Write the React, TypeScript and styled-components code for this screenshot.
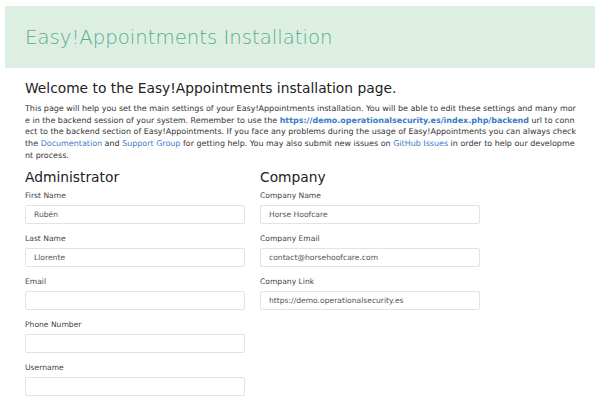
import React from "react";
import styled, { createGlobalStyle } from "styled-components";

const GlobalStyle = createGlobalStyle`
  html, body {
    margin: 0;
    padding: 0;
    background: #ffffff;
    font-family: "DejaVu Sans", "Liberation Sans", sans-serif;
    color: #333333;
  }
`;

const Page = styled.div`
  width: 600px;
  height: 407px;
  overflow: hidden;
  padding-top: 6px;
  box-sizing: border-box;
`;

const Banner = styled.header`
  margin: 0 5px;
  height: 62px;
  background-color: #ddefe3;
  display: flex;
  align-items: center;
  padding-left: 20px;
`;

const Title = styled.h1`
  margin: 0;
  font-size: 19.7px;
  font-weight: 200;
  color: #5aac8a;
`;

const Content = styled.main`
  padding: 0 25px;
`;

const Welcome = styled.h2`
  margin: 12px 0 7px 0;
  font-size: 13.8px;
  font-weight: normal;
  color: #222222;
`;

const Intro = styled.p`
  margin: 0;
  width: 552px;
  font-size: 7.98px;
  line-height: 11.7px;
  word-break: break-all;
  color: #333333;
`;

const Link = styled.a<{ $bold?: boolean }>`
  color: #3b7bc8;
  text-decoration: none;
  font-weight: ${({ $bold }) => ($bold ? "bold" : "normal")};
`;

const Columns = styled.div`
  display: grid;
  grid-template-columns: 220px 220px;
  column-gap: 15px;
  margin-top: 7px;
`;

const Column = styled.section`
  display: flex;
  flex-direction: column;
`;

const SectionTitle = styled.h3`
  margin: 0 0 5px 0;
  font-size: 13.8px;
  font-weight: normal;
  color: #222222;
`;

const Field = styled.div`
  display: flex;
  flex-direction: column;
  margin-bottom: 9px;
`;

const Label = styled.label`
  font-size: 7.6px;
  line-height: 11px;
  color: #444444;
  margin-bottom: 4px;
`;

const Input = styled.input`
  box-sizing: border-box;
  width: 220px;
  height: 19px;
  border: 1px solid #e3e3e3;
  border-radius: 2px;
  padding: 0 8px;
  font-family: "DejaVu Sans", sans-serif;
  font-size: 7.6px;
  color: #555555;
  background: #ffffff;
  outline: none;
`;

type FieldDef = { label: string; value?: string };

const adminFields: FieldDef[] = [
  { label: "First Name", value: "Rubén" },
  { label: "Last Name", value: "Llorente" },
  { label: "Email" },
  { label: "Phone Number" },
  { label: "Username" },
];

const companyFields: FieldDef[] = [
  { label: "Company Name", value: "Horse Hoofcare" },
  { label: "Company Email", value: "contact@horsehoofcare.com" },
  { label: "Company Link", value: "https://demo.operationalsecurity.es" },
];

const FormColumn = ({ title, fields }: { title: string; fields: FieldDef[] }) => (
  <Column>
    <SectionTitle>{title}</SectionTitle>
    {fields.map((f) => (
      <Field key={f.label}>
        <Label>{f.label}</Label>
        <Input defaultValue={f.value ?? ""} />
      </Field>
    ))}
  </Column>
);

const App = () => {
  return (
    <>
      <GlobalStyle />
      <Page>
        <Banner>
          <Title>Easy!Appointments Installation</Title>
        </Banner>
        <Content>
          <Welcome>Welcome to the Easy!Appointments installation page.</Welcome>
          <Intro>
            This page will help you set the main settings of your Easy!Appointments installation. You
            will be able to edit these settings and many more in the backend session of your system.
            Remember to use the{" "}
            <Link $bold href="#">
              https://demo.operationalsecurity.es/index.php/backend
            </Link>{" "}
            url to connect to the backend section of Easy!Appointments. If you face any problems
            during the usage of Easy!Appointments you can always check the{" "}
            <Link href="#">Documentation</Link> and <Link href="#">Support Group</Link> for getting
            help. You may also submit new issues on <Link href="#">GitHub Issues</Link> in order to
            help our development process.
          </Intro>
          <Columns>
            <FormColumn title="Administrator" fields={adminFields} />
            <FormColumn title="Company" fields={companyFields} />
          </Columns>
        </Content>
      </Page>
    </>
  );
};

export default App;
